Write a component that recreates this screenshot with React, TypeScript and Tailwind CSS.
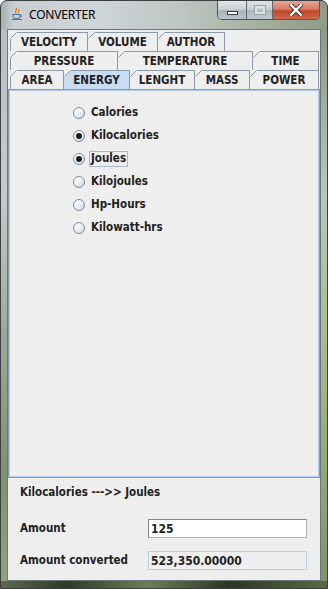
import React from "react";

type TabDef = { label: string; w: string; selected?: boolean };

const rows: TabDef[][] = [
  [
    { label: "VELOCITY", w: "w-[77px]" },
    { label: "VOLUME", w: "w-[70px]" },
    { label: "AUTHOR", w: "w-[68px]" },
  ],
  [
    { label: "PRESSURE", w: "w-[107px]" },
    { label: "TEMPERATURE", w: "w-[135px]" },
    { label: "TIME", w: "w-[67px]" },
  ],
  [
    { label: "AREA", w: "w-[53px]" },
    { label: "ENERGY", w: "w-[66px]", selected: true },
    { label: "LENGHT", w: "w-[65px]" },
    { label: "MASS", w: "w-[55px]" },
    { label: "POWER", w: "w-[70px]" },
  ],
];

function Tab({ t, first, last }: { t: TabDef; first: boolean; last: boolean }) {
  return (
    <div
      className={`relative h-[19px] shrink-0 border-t border-l border-[#8a9aab] ${last ? "border-r" : ""} ${
        t.selected ? "bg-[#c8ddf2]" : "bg-[#eeeeee]"
      } ${t.w} flex items-center justify-center text-[11.5px] font-bold text-[#222222] leading-none`}
    >
      <svg
        className={`absolute top-[-1px] ${first ? "left-[-1px]" : "left-0"}`}
        width="7"
        height="7"
        viewBox="0 0 7 7"
      >
        <path d="M0 0H7V0.5L0.5 7H0Z" fill="#eeeeee" />
        <line x1="0.5" y1="6.5" x2="6.5" y2="0.5" stroke="#8a9aab" strokeWidth="1" />
      </svg>
      <span className="pt-[1px]">{t.label}</span>
    </div>
  );
}

function Radio({ label, checked, focus }: { label: string; checked?: boolean; focus?: boolean }) {
  return (
    <div className="flex items-center h-[23px]">
      <div className="w-[12px] h-[12px] rounded-full border border-[#7d8c9c] bg-[linear-gradient(135deg,#ffffff_0%,#eef2f6_45%,#c9d5e2_100%)] flex items-center justify-center">
        {checked && <div className="w-[6px] h-[6px] rounded-full bg-[#1e1e1e]" />}
      </div>
      <div
        className={`ml-[4px] h-[16px] flex items-center px-[1px] text-[11.5px] font-bold text-[#222222] ${
          focus ? "border border-[#a3b8cc]" : "border border-transparent"
        }`}
      >
        {label}
      </div>
    </div>
  );
}

function JavaIcon() {
  return (
    <svg width="12" height="14" viewBox="0 0 12 14">
      <path d="M5 1 C7 3 3 4 5 6" stroke="#e76f00" strokeWidth="1.2" fill="none" />
      <path d="M7.5 2 C9 3.5 6 4.5 7.5 6" stroke="#e76f00" strokeWidth="1" fill="none" />
      <path d="M2 7.5 H9 V9.5 C9 11 7.5 11.5 5.5 11.5 C3.5 11.5 2 11 2 9.5Z" fill="none" stroke="#3a6ea5" strokeWidth="1" />
      <path d="M9 8 C11 8 11 10 9 10" stroke="#3a6ea5" strokeWidth="1" fill="none" />
      <path d="M1 12.5 H11" stroke="#3a6ea5" strokeWidth="1" />
    </svg>
  );
}

export default function App() {
  return (
    <div className="w-[328px] h-[589px] font-['DejaVu_Sans_Condensed','DejaVu_Sans',sans-serif] font-stretch-condensed bg-white">
      <div className="w-[328px] h-[589px] rounded-t-[7px] border border-[#3b3f42] overflow-hidden flex flex-col bg-[linear-gradient(to_right,#a9b0b4_0%,#c8ced2_4%,#cfd4d8_30%,#bec5c2_55%,#a4ae9f_80%,#8e9b86_100%)]">
        {/* Title bar */}
        <div className="h-[28px] flex items-start shrink-0">
          <div className="mt-[6px] ml-[10px] flex items-center">
            <JavaIcon />
            <span className="ml-[6px] text-[12px] text-black font-['Noto_Sans',sans-serif] font-stretch-normal leading-none tracking-[-0.2px] mt-[1px]">
              CONVERTER
            </span>
          </div>
          <div className="ml-auto mr-[7px] flex h-[19px] rounded-b-[5px] overflow-hidden border border-t-0 border-[#4f5860]">
            <div className="w-[29px] h-full bg-[linear-gradient(to_bottom,#e2e6ea_0%,#cbd1d7_45%,#a9b1b9_55%,#bcc4cb_100%)] border-r border-[#5d666e] flex items-center justify-center">
              <div className="w-[11px] h-[4px] bg-white border border-[#3a3f44] mt-[5px]" />
            </div>
            <div className="w-[26px] h-full bg-[linear-gradient(to_bottom,#dde2e6_0%,#c8ced3_45%,#aeb6bd_55%,#c0c7cd_100%)] border-r border-[#5d666e] flex items-center justify-center">
              <div className="w-[10px] h-[8px] border-2 border-[#dfe3e6] outline outline-1 outline-[#9aa2a9]" />
            </div>
            <div className="w-[46px] h-full bg-[linear-gradient(to_bottom,#e8a595_0%,#d97a66_45%,#c2452c_55%,#cf6a4c_100%)] flex items-center justify-center">
              <svg width="14" height="12" viewBox="0 0 14 12">
                <path d="M2 1 L12 11 M12 1 L2 11" stroke="#4a2a24" strokeWidth="4.2" strokeLinecap="square" />
                <path d="M2 1 L12 11 M12 1 L2 11" stroke="#ffffff" strokeWidth="2.4" strokeLinecap="square" />
              </svg>
            </div>
          </div>
        </div>

        {/* Middle: frames + client */}
        <div className="flex flex-1">
          <div className="w-[6px] bg-[linear-gradient(to_bottom,#b9bfc2_0%,#c6ccc8_30%,#9ea89a_55%,#7f926f_80%,#8fa27e_100%)]" />
          <div className="w-[314px] h-[552px] border border-[#6c7780] bg-[#eeeeee] flex flex-col">
            {/* Tabs */}
            <div className="pt-[2px] pl-[2px] flex flex-col">
              {rows.map((row, ri) => (
                <div key={ri} className="flex">
                  {row.map((t, i) => (
                    <Tab key={t.label} t={t} first={i === 0} last={i === row.length - 1} />
                  ))}
                </div>
              ))}
            </div>
            {/* Panel */}
            <div className="h-[389px] border border-[#8a9aab] shrink-0">
              <div className="h-full border border-[#b4cdea] pt-[10px] pl-[63px] flex flex-col">
                <Radio label="Calories" />
                <Radio label="Kilocalories" checked />
                <Radio label="Joules" checked focus />
                <Radio label="Kilojoules" />
                <Radio label="Hp-Hours" />
                <Radio label="Kilowatt-hrs" />
              </div>
            </div>
            {/* Bottom */}
            <div className="flex flex-col pl-[12px] text-[11.5px] font-bold text-[#222222]">
              <div className="mt-[7px] h-[16px] flex items-center">
                Kilocalories ---&gt;&gt; Joules
              </div>
              <div className="mt-[18px] h-[19px] flex items-center">
                <div className="w-[128px]">Amount</div>
                <div className="w-[159px] h-[19px] bg-white border border-[#7a8a99] border-r-[#a9b4bf] border-b-[#a9b4bf] flex items-center pl-[2px] text-[12px]">
                  125
                </div>
              </div>
              <div className="mt-[13px] h-[19px] flex items-center">
                <div className="w-[128px]">Amount converted</div>
                <div className="w-[159px] h-[19px] bg-[#eeeeee] border border-[#b8cfe5] flex items-center pl-[2px] text-[12px]">
                  523,350.00000
                </div>
              </div>
            </div>
          </div>
          <div className="w-[6px] bg-[linear-gradient(to_bottom,#8c9a86_0%,#b9c8b0_30%,#a8bc92_55%,#90a878_80%,#7d9468_100%)]" />
        </div>
        <div className="h-[7px] shrink-0 bg-[linear-gradient(to_right,#5e6a4c_0%,#2f3a24_20%,#6e7d58_45%,#2c3520_70%,#5a6a44_100%)]" />
      </div>
    </div>
  );
}
